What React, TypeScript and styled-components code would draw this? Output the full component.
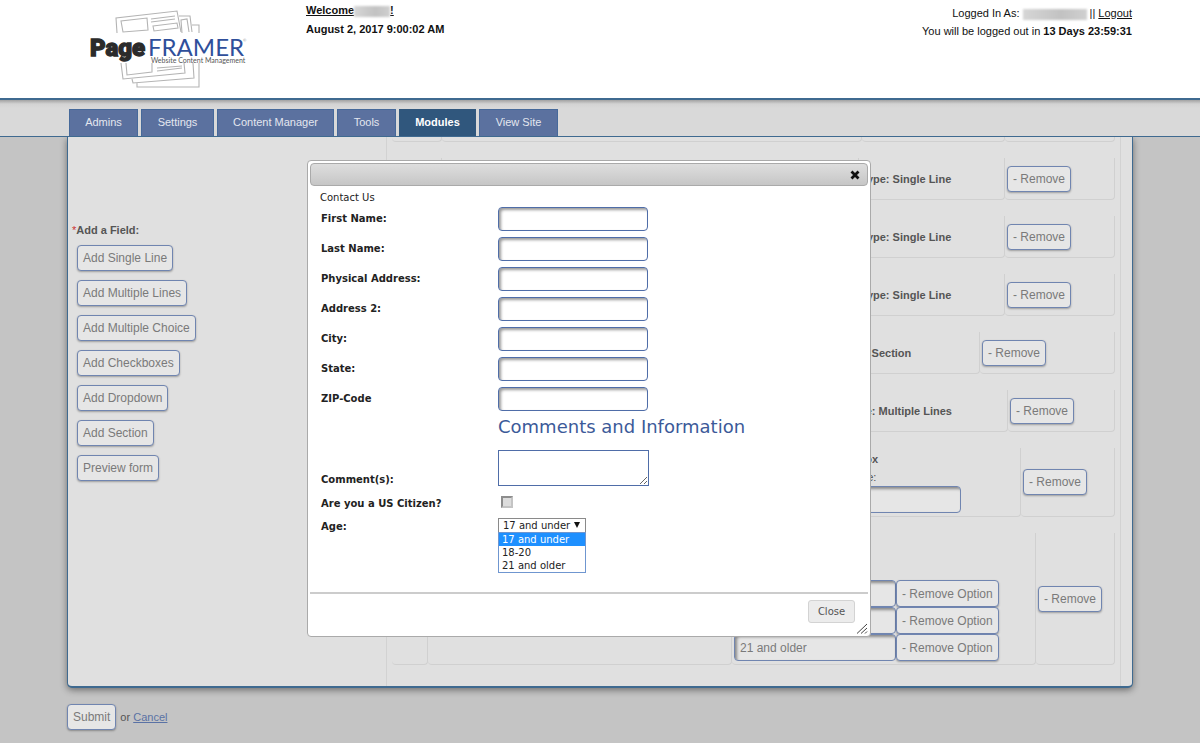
import React, { useState } from "react";
import styled, { createGlobalStyle, css } from "styled-components";

const GlobalStyle = createGlobalStyle`
  *, *::before, *::after { box-sizing: border-box; }
  body {
    margin: 0;
    background: #c4c4c4;
    color: #555;
    font-family: "Liberation Sans", Arial, sans-serif;
    font-size: 11px;
  }
`;

const edge = "#3f6a90";
const fieldBlue = "#7085b0";
const gutter = 68;

const Header = styled.header`
  display: flex;
  align-items: flex-start;
  height: 100px;
  padding: 0 ${gutter}px;
  background: #fff;
  color: #111;
  border-bottom: 2px solid ${edge};
`;

const LogoLink = styled.a`
  flex: 0 0 238px;
  padding: 8px 0 0 20px;
  svg { display: block; }
`;

const Greeting = styled.div`
  flex: 1;
  padding-top: 1px;
  font-weight: bold;
  line-height: 19px;
`;

const HeaderLink = styled.a`
  color: inherit;
  text-decoration: underline;
`;

const Session = styled.div`
  text-align: right;
  line-height: 18px;
  padding-top: 4px;
`;

const Redacted = styled.span<{ $width: number }>`
  display: inline-block;
  width: ${(p) => p.$width}px;
  height: 11px;
  vertical-align: middle;
  background: linear-gradient(90deg, #d6d6d6, #c2c2c2 60%, #d0d0d0);
  filter: blur(1px);
`;

const Nav = styled.nav`
  position: relative;
  display: flex;
  align-items: flex-end;
  gap: 3px;
  height: 37px;
  padding: 0 ${gutter + 1}px;
  background: linear-gradient(#a2a2a2, #d3d3d3 4px, #d9d9d9 8px);
  border-bottom: 1px solid ${edge};
`;

const Tab = styled.a<{ $active?: boolean; $width: number }>`
  width: ${(p) => p.$width}px;
  height: 27px;
  line-height: 25px;
  text-align: center;
  text-decoration: none;
  color: #e4e7ef;
  border: 1px solid #46699a;
  border-bottom: 0;
  background: #5b719f;
  ${(p) =>
    p.$active &&
    css`
      background: #30577d;
      border-color: #30577d;
      color: #fff;
      font-weight: bold;
    `}
`;

const Page = styled.main`
  padding: 0 ${gutter - 1}px 13px;
`;

const Panel = styled.section`
  display: flex;
  min-height: 550px;
  background: #e0e0e0;
  border: 1px solid ${edge};
  border-top: 0;
  border-bottom-width: 2px;
  border-radius: 0 0 5px 5px;
  box-shadow: 0 2px 7px rgba(0, 0, 0, 0.45);
`;

const Sidebar = styled.div`
  flex: 0 0 318px;
  display: flex;
  flex-direction: column;
  align-items: flex-start;
  gap: 9px;
  padding: 85px 9px 0;
`;

const SidebarTitle = styled.h2`
  margin: 0 0 -2px -5px;
  font-size: 11px;
  line-height: 16px;
  color: #555;
`;

const Required = styled.span`
  color: #c33;
  font-weight: normal;
`;

const Button = styled.button`
  height: 26px;
  padding: 0 5px;
  font-family: inherit;
  font-size: 12px;
  color: #7a7a7a;
  background: #e6e6e6;
  border: 1px solid ${fieldBlue};
  border-radius: 4px;
  box-shadow: 0 1px 2px rgba(0, 0, 0, 0.3);
  white-space: nowrap;
`;

const FieldList = styled.div`
  flex: 1;
  min-width: 0;
  display: flex;
  flex-direction: column;
  gap: 16px;
  margin-right: 11px;
  padding: 0 5px 21px;
  border: 1px solid #d2d2d2;
  border-width: 0 1px;
`;

const FieldRow = styled.div<{ $height: number }>`
  display: flex;
  height: ${(p) => p.$height}px;
`;

const Cell = styled.div<{ $width?: number; $bottom?: boolean }>`
  flex: ${(p) => (p.$width ? `0 0 ${p.$width}px` : "1 1 0")};
  display: flex;
  flex-direction: column;
  justify-content: ${(p) => (p.$bottom ? "flex-end" : "center")};
  align-items: flex-start;
  padding: ${(p) => (p.$bottom ? "0 2px 3px" : "0 2px")};
  border: 1px solid #d0d0d0;
  border-width: 0 1px 1px 0;
  border-radius: 0 0 4px 4px;
`;

const TypeLabel = styled.strong`
  line-height: 18px;
  white-space: nowrap;
`;

const ValueLabel = styled.label`
  line-height: 18px;
`;

const textBox = css`
  border: 1px solid ${fieldBlue};
  border-radius: 4px;
  box-shadow: inset 2px 2px 3px rgba(0, 0, 0, 0.4);
`;

const OptionInput = styled.input<{ $width?: number }>`
  ${textBox}
  width: ${(p) => p.$width || 162}px;
  height: 27px;
  padding: 0 5px;
  font-family: inherit;
  font-size: 12px;
  color: #7a7a7a;
  background: #e6e6e6;
`;

const OptionLine = styled.div`
  display: flex;
  ${Button} { height: 27px; }
`;

const FormActions = styled.div`
  display: flex;
  align-items: center;
  gap: 4px;
  padding-top: 16px;
`;

const CancelLink = styled.a`
  color: #5a72a5;
`;

const Dialog = styled.div`
  position: absolute;
  top: 160px;
  left: calc(50% - 293px);
  width: 564px;
  padding: 2px;
  font-family: "DejaVu Sans", Verdana, sans-serif;
  font-size: 10px;
  color: #222;
  background: #fff;
  border: 1px solid #aaa;
  border-radius: 4px;
`;

const TitleBar = styled.div`
  display: flex;
  justify-content: flex-end;
  align-items: center;
  height: 23px;
  padding-right: 7px;
  background: linear-gradient(#dedede, #c6c6c6);
  border: 1px solid #aaa;
  border-radius: 4px;
`;

const CloseIcon = styled.button`
  display: flex;
  padding: 0;
  border: 0;
  background: none;
`;

const DialogBody = styled.form`
  display: flex;
  flex-direction: column;
  height: 406px;
  padding: 5px 12px 0 11px;
`;

const FormName = styled.div`
  margin-left: -1px;
  line-height: 13px;
`;

const FormRow = styled.div<{ $height?: number; $align?: string }>`
  display: flex;
  align-items: ${(p) => p.$align || "center"};
  height: ${(p) => p.$height || 30}px;
`;

const Label = styled.label`
  flex: 0 0 177px;
  font-weight: bold;
  line-height: 12px;
`;

const TextInput = styled.input`
  ${textBox}
  width: 150px;
  height: 24px;
  padding: 0 5px;
  background: #fff;
  border-color: #4f6da8;
`;

const SectionHeading = styled.h3`
  margin: 0 0 0 177px;
  font-size: 18px;
  line-height: 26px;
  font-weight: normal;
  color: #3c5a99;
  white-space: nowrap;
`;

const TextArea = styled.textarea`
  display: block;
  width: 151px;
  height: 36px;
  border: 1px solid #4f6da8;
  background: #fff;
`;

const CheckBox = styled.input`
  appearance: none;
  width: 12px;
  height: 12px;
  margin: 0 0 2px 3px;
  background: #ddd;
  border: 2px solid;
  border-color: #8d8d8d #c4c4c4 #c4c4c4 #8d8d8d;
`;

const SelectBox = styled.div`
  position: relative;
  width: 88px;
`;

const Select = styled.select`
  appearance: none;
  display: block;
  width: 100%;
  height: 15px;
  padding: 0 0 0 4px;
  font-family: inherit;
  font-size: 10px;
  line-height: 13px;
  color: #222;
  background: #fff;
  border: 1px solid #8a8a8a;
  border-radius: 0;
`;

const Arrow = styled.svg`
  position: absolute;
  top: 4px;
  right: 6px;
  pointer-events: none;
`;

const OptionMenu = styled.ul`
  position: absolute;
  top: 14px;
  left: 0;
  width: 100%;
  margin: 0;
  padding: 0;
  list-style: none;
  background: #fff;
  border: 1px solid #6f96d0;
`;

const MenuItem = styled.li<{ $selected?: boolean }>`
  padding-left: 3px;
  line-height: 13px;
  height: 13px;
  white-space: nowrap;
  ${(p) => p.$selected && "background: #1e90ff; color: #fff;"}
`;

const ButtonPane = styled.div`
  display: flex;
  justify-content: flex-end;
  height: 42px;
  padding: 6px 13px 0;
  border-top: 2px solid #ccc;
`;

const CloseButton = styled.button`
  width: 47px;
  height: 23px;
  padding: 0;
  font-family: inherit;
  font-size: 10px;
  color: #555;
  background: #ececec;
  border: 1px solid #d3d3d3;
  border-radius: 3px;
`;

const ResizeGrip = styled.svg`
  position: absolute;
  right: 2px;
  bottom: 2px;
`;

const Logo = () => (
  <svg width="160" height="82" viewBox="0 0 160 82" role="img" aria-label="PageFramer">
    <g fill="none" stroke="#b4b4b4" strokeWidth="1.1">
      <path d="M29 25 L28 10 L89 3 L93 24" />
      <path d="M35 24 L33 13 L59 10 L60 22 Z" />
      <path d="M63 11 L87 8 M63 14 L87 11" />
      <path d="M65 18 L89 15 L90 20 L66 23 Z" />
      <path d="M91 8 L102 8 L104 24 M94 25 L93 12 L99 11 L101 24 M104 17 L111 17 L111 25" />
      <path d="M33 55 L35 71 L97 65 L96 55" />
      <path d="M38 55 L39 67 L64 64 L64 55" />
      <path d="M69 60 L94 58 M69 63 L94 60" />
      <path d="M44 71 L45 75 L106 70 L105 55 M49 75 L49 79 L111 79 L111 55" />
    </g>
    <text x="2" y="48" fontFamily="Roboto, sans-serif" fontWeight="900" fontSize="24" fill="#2b2b2b" stroke="#2b2b2b" strokeWidth="1.3">Page</text>
    <text x="60" y="48" fontFamily="Lato, sans-serif" fontSize="24" fill="#2f4f9b">FRAMER</text>
    <text x="63" y="55" fontFamily="Lato, sans-serif" fontSize="7" fill="#555">Website Content Management</text>
    <text x="155" y="34" fontFamily="Lato, sans-serif" fontSize="4" fill="#777">©</text>
  </svg>
);

const tabs = [
  { name: "Admins", width: 69 },
  { name: "Settings", width: 73 },
  { name: "Content Manager", width: 117 },
  { name: "Tools", width: 59 },
  { name: "Modules", width: 77, active: true },
  { name: "View Site", width: 79 },
];

const adders = [
  "Add Single Line",
  "Add Multiple Lines",
  "Add Multiple Choice",
  "Add Checkboxes",
  "Add Dropdown",
  "Add Section",
  "Preview form",
];

const simpleRows = [
  { type: "Single Line", typeWidth: 146, removeWidth: 110 },
  { type: "Single Line", typeWidth: 146, removeWidth: 110 },
  { type: "Single Line", typeWidth: 146, removeWidth: 110 },
  { type: "Section", typeWidth: 142, removeWidth: 135 },
  { type: "Multiple Lines", typeWidth: 163, removeWidth: 107 },
];

const formFields = [
  "First Name:",
  "Last Name:",
  "Physical Address:",
  "Address 2:",
  "City:",
  "State:",
  "ZIP-Code",
];

const ages = ["17 and under", "18-20", "21 and older"];

function FormDialog() {
  const [age, setAge] = useState(ages[0]);
  return (
    <Dialog role="dialog" aria-label="Form preview">
      <TitleBar>
        <CloseIcon type="button" aria-label="Close dialog">
          <svg width="10" height="10" viewBox="0 0 10 10">
            <path d="M1.5 1.5 L8.5 8.5 M8.5 1.5 L1.5 8.5" stroke="#111" strokeWidth="2.8" />
          </svg>
        </CloseIcon>
      </TitleBar>
      <DialogBody>
        <FormName>Contact Us</FormName>
        {formFields.map((name, i) => (
          <FormRow key={name}>
            <Label htmlFor={`field-${i}`}>{name}</Label>
            <TextInput id={`field-${i}`} type="text" />
          </FormRow>
        ))}
        <SectionHeading>Comments and Information</SectionHeading>
        <FormRow $height={46} $align="flex-end">
          <Label htmlFor="comments">Comment(s):</Label>
          <TextArea id="comments" />
        </FormRow>
        <FormRow $height={24} $align="flex-end">
          <Label htmlFor="citizen">Are you a US Citizen?</Label>
          <CheckBox id="citizen" type="checkbox" />
        </FormRow>
        <FormRow $height={23} $align="flex-end">
          <Label htmlFor="age">Age:</Label>
          <SelectBox>
            <Select id="age" value={age} onChange={(e) => setAge(e.target.value)}>
              {ages.map((a) => (
                <option key={a}>{a}</option>
              ))}
            </Select>
            <Arrow width="6" height="6" viewBox="0 0 6 6">
              <path d="M0 0 H6 L3 6 Z" fill="#111" />
            </Arrow>
            <OptionMenu>
              {ages.map((a) => (
                <MenuItem key={a} $selected={a === age} onClick={() => setAge(a)}>
                  {a}
                </MenuItem>
              ))}
            </OptionMenu>
          </SelectBox>
        </FormRow>
      </DialogBody>
      <ButtonPane>
        <CloseButton type="button">Close</CloseButton>
      </ButtonPane>
      <ResizeGrip width="11" height="11" viewBox="0 0 11 11">
        <path d="M0 10.5 L10 1 M4 10.5 L10 5 M8 10.5 L10 8.5" stroke="#444" fill="none" />
      </ResizeGrip>
    </Dialog>
  );
}

export default function App() {
  return (
    <>
      <GlobalStyle />
      <Header>
        <LogoLink href="#">
          <Logo />
        </LogoLink>
        <Greeting>
          <div>
            <HeaderLink href="#">
              Welcome
              <Redacted $width={36} />!
            </HeaderLink>
          </div>
          <div>August 2, 2017 9:00:02 AM</div>
        </Greeting>
        <Session>
          <div>
            Logged In As: <Redacted $width={64} /> || <HeaderLink href="#">Logout</HeaderLink>
          </div>
          <div>
            You will be logged out in <b>13 Days 23:59:31</b>
          </div>
        </Session>
      </Header>
      <Nav>
        {tabs.map((t) => (
          <Tab key={t.name} href="#" $width={t.width} $active={t.active}>
            {t.name}
          </Tab>
        ))}
      </Nav>
      <Page>
        <Panel>
          <Sidebar>
            <SidebarTitle>
              <Required>*</Required>Add a Field:
            </SidebarTitle>
            {adders.map((a) => (
              <Button key={a}>{a}</Button>
            ))}
          </Sidebar>
          <FieldList>
            <FieldRow $height={5}>
              <Cell $width={50} />
              <Cell />
              <Cell $width={143} />
              <Cell $width={110} />
            </FieldRow>
            {simpleRows.map((r, i) => (
              <FieldRow key={i} $height={42}>
                <Cell $width={50} />
                <Cell />
                <Cell $width={r.typeWidth}>
                  <TypeLabel>Type: {r.type}</TypeLabel>
                </Cell>
                <Cell $width={r.removeWidth}>
                  <Button>- Remove</Button>
                </Cell>
              </FieldRow>
            ))}
            <FieldRow $height={69}>
              <Cell $width={50} />
              <Cell />
              <Cell $width={229} $bottom>
                <TypeLabel>Type: Checkbox</TypeLabel>
                <ValueLabel htmlFor="checkbox-value">Checkbox Value:</ValueLabel>
                <OptionInput id="checkbox-value" type="text" $width={167} />
              </Cell>
              <Cell $width={94}>
                <Button>- Remove</Button>
              </Cell>
            </FieldRow>
            <FieldRow $height={132}>
              <Cell $width={36} />
              <Cell />
              <Cell $width={304} $bottom>
                <TypeLabel>Type: Dropdown</TypeLabel>
                {ages.map((a) => (
                  <OptionLine key={a}>
                    <OptionInput type="text" defaultValue={a} aria-label="Option" />
                    <Button>- Remove Option</Button>
                  </OptionLine>
                ))}
              </Cell>
              <Cell $width={79}>
                <Button>- Remove</Button>
              </Cell>
            </FieldRow>
          </FieldList>
        </Panel>
        <FormActions>
          <Button type="submit">Submit</Button>
          <span>
            or <CancelLink href="#">Cancel</CancelLink>
          </span>
        </FormActions>
      </Page>
      <FormDialog />
    </>
  );
}
